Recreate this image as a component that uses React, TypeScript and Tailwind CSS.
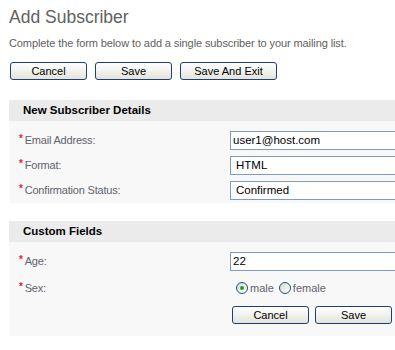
import React from "react";

const font = { fontFamily: "'Liberation Sans', Arial, sans-serif" };

function Btn({ label, w }: { label: string; w: string }) {
  return (
    <button
      className={`${w} h-[18px] shrink-0 rounded-[3px] border border-[#1e3f6f] bg-gradient-to-b from-white to-[#e4e4dc] text-[11px] leading-[16px] text-black`}
    >
      {label}
    </button>
  );
}

function Label({ text }: { text: string }) {
  return (
    <div className="w-[221px] shrink-0 pl-[10px] text-[11px] tracking-[-0.2px] text-[#62626e] flex items-center">
      <span className="text-[#e8203a] text-[10px] mr-[2px] -mt-[4px] font-bold">*</span>
      <span>{text}</span>
    </div>
  );
}

function Row({ label, children }: { label: string; children: React.ReactNode }) {
  return (
    <div className="flex items-center h-[25px]">
      <Label text={label} />
      {children}
    </div>
  );
}

function Input({ value, pad }: { value: string; pad?: boolean }) {
  return (
    <div
      className={`w-[200px] shrink-0 h-[19px] border border-[#7f9db9] bg-white text-[11.5px] leading-[17px] text-black ${pad ? "pl-[5px]" : "pl-[2px]"} whitespace-nowrap`}
    >
      {value}
    </div>
  );
}

function Radio({ checked }: { checked?: boolean }) {
  return (
    <span className="inline-flex w-[12px] h-[12px] rounded-full border border-[#1c5180] bg-gradient-to-br from-[#d8d8d0] to-white items-center justify-center">
      {checked && <span className="w-[4px] h-[4px] rounded-full bg-[#21a121]" />}
    </span>
  );
}

export default function App() {
  return (
    <div className="w-[395px] h-[350px] overflow-hidden bg-white" style={font}>
      <div className="pl-[9px] pt-[6px]">
        <h1 className="text-[17.5px] leading-[22px] text-[#616161]">Add Subscriber</h1>
        <p className="mt-[8px] text-[11px] tracking-[-0.1px] leading-[14px] text-[#616161]">
          Complete the form below to add a single subscriber to your mailing list.
        </p>
        <div className="mt-[12px] flex gap-[8px] pl-[1px]">
          <Btn label="Cancel" w="w-[77px]" />
          <Btn label="Save" w="w-[77px]" />
          <Btn label="Save And Exit" w="w-[97px]" />
        </div>
      </div>

      <div className="ml-[9px] mt-[20px] bg-[#f8f8f8] overflow-hidden">
        <div className="h-[21px] bg-[#ebebeb] pl-[14px] text-[11.5px] leading-[21px] font-bold text-black">
          New Subscriber Details
        </div>
        <div className="pt-[7px]">
          <Row label="Email Address:">
            <Input value="user1@host.com" />
          </Row>
          <Row label="Format:">
            <Input value="HTML" pad />
          </Row>
          <Row label="Confirmation Status:">
            <Input value="Confirmed" pad />
          </Row>
        </div>
      </div>

      <div className="ml-[9px] mt-[18px] bg-[#f8f8f8] overflow-hidden h-[115px]">
        <div className="h-[21px] bg-[#ebebeb] pl-[14px] text-[11.5px] leading-[21px] font-bold text-black">
          Custom Fields
        </div>
        <div className="pt-[7px]">
          <Row label="Age:">
            <Input value="22" />
          </Row>
          <div className="flex items-center h-[28px]">
            <Label text="Sex:" />
            <div className="flex items-center pl-[6px] text-[11px] text-[#62626e]">
              <Radio checked />
              <span className="ml-[2px] mr-[5px]">male</span>
              <Radio />
              <span className="ml-[2px]">female</span>
            </div>
          </div>
          <div className="flex gap-[6px] pl-[223px] pt-[4px]">
            <Btn label="Cancel" w="w-[77px]" />
            <Btn label="Save" w="w-[77px]" />
          </div>
        </div>
      </div>
    </div>
  );
}
